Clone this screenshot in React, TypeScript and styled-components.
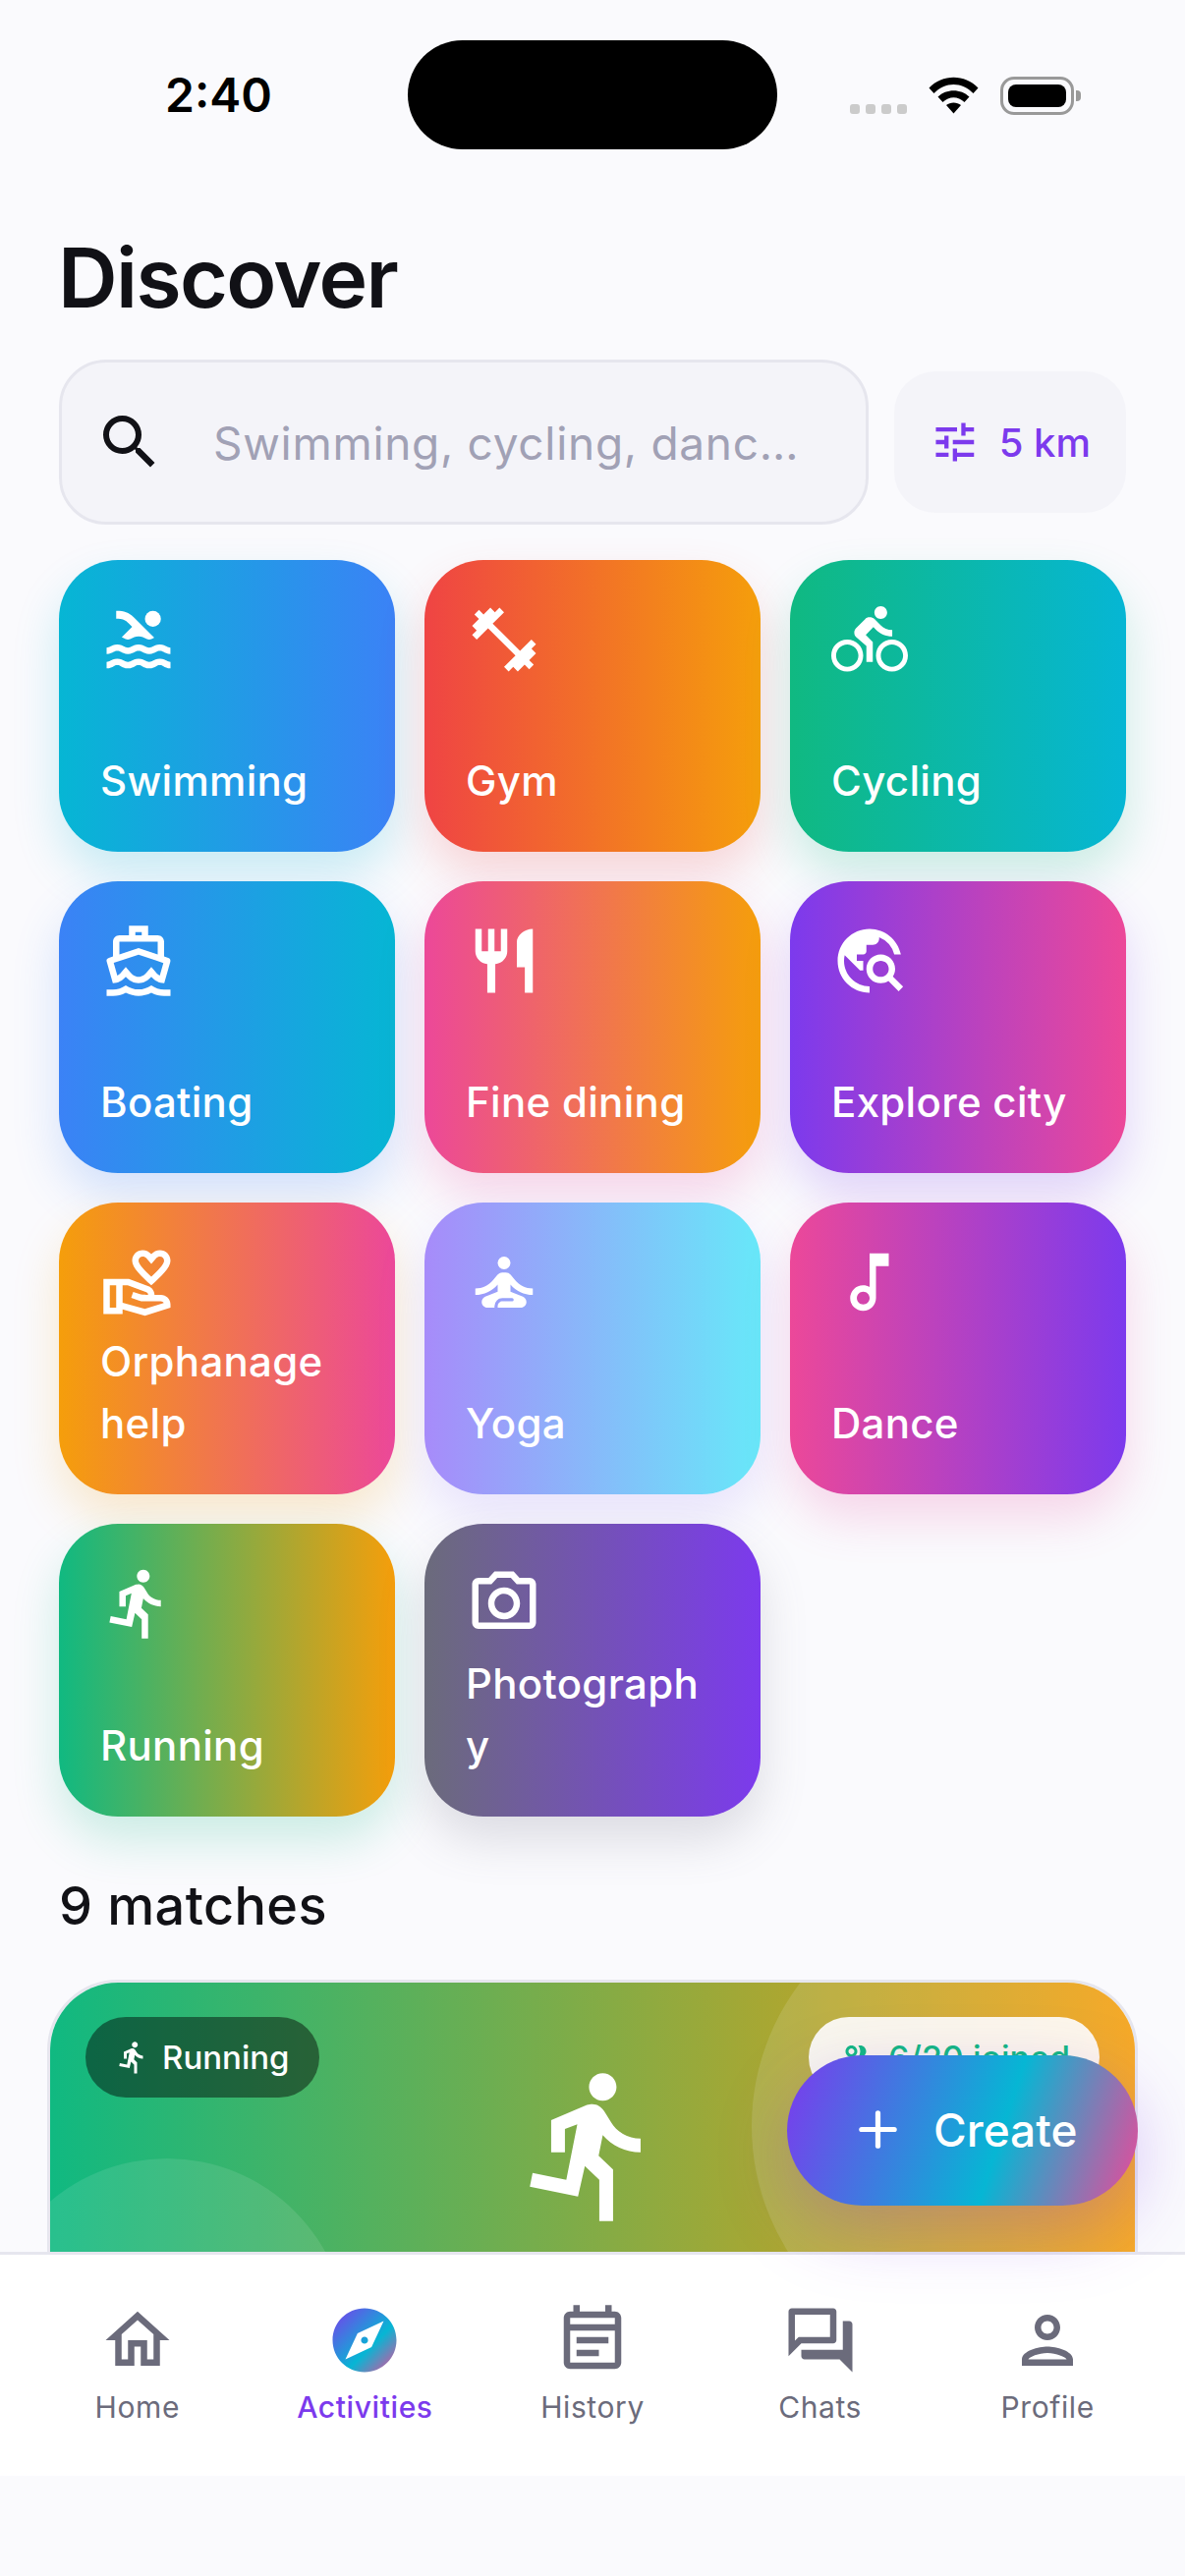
import React from "react";
import styled, { createGlobalStyle } from "styled-components";
import type { IconType } from "react-icons";
import { Plus } from "lucide-react";
import {
  MdDirectionsBike,
  MdDirectionsRun,
  MdFitnessCenter,
  MdOutlineCameraAlt,
  MdOutlineDirectionsBoat,
  MdOutlineEventNote,
  MdOutlineForum,
  MdOutlineHome,
  MdOutlineMusicNote,
  MdOutlinePeopleAlt,
  MdOutlinePerson,
  MdOutlineVolunteerActivism,
  MdPool,
  MdRestaurant,
  MdSearch,
  MdSelfImprovement,
  MdTravelExplore,
  MdTune,
} from "react-icons/md";

const Global = createGlobalStyle`
  html, body { margin: 0; padding: 0; background: #fafafd; }
  * { box-sizing: border-box; }
  body { font-family: Inter, "Liberation Sans", sans-serif; }
`;

const Phone = styled.div`
  position: relative;
  width: 1206px;
  height: 2622px;
  display: flex;
  flex-direction: column;
  background: #fafafd;
  overflow: hidden;
`;

const Main = styled.main`
  flex: 1;
  min-height: 0;
  overflow: hidden;
  display: flex;
  flex-direction: column;
`;

const StatusBar = styled.div`
  flex: none;
  height: 233px;
  padding: 41px 106px 0 168px;
  display: flex;
  align-items: flex-start;
`;

const Time = styled.div`
  flex: none;
  width: 247px;
  height: 111px;
  display: flex;
  align-items: center;
  font-size: 48px;
  font-weight: 600;
  color: #000;
`;

const Island = styled.div`
  flex: none;
  width: 376px;
  height: 111px;
  border-radius: 56px;
  background: #000;
`;

const StatusIcons = styled.div`
  flex: none;
  width: 235px;
  height: 111px;
  padding: 37px 0 0 0;
  margin-left: 74px;
  display: flex;
  align-items: flex-start;
`;

const Dots = styled.div`
  display: flex;
  gap: 6px;
  margin: 28px 22px 0 0;
`;

const Dot = styled.span`
  width: 10px;
  height: 10px;
  border-radius: 3px;
  background: #cbcbcb;
`;

const Battery = styled.div`
  position: relative;
  width: 75px;
  height: 39px;
  margin-left: 22px;
  padding: 5px;
  border: 3px solid #999;
  border-radius: 14px;
  &::after {
    content: "";
    position: absolute;
    right: -10px;
    top: 11px;
    width: 5px;
    height: 11px;
    border-radius: 0 4px 4px 0;
    background: #999;
  }
`;

const BatteryFill = styled.div`
  width: 100%;
  height: 100%;
  border-radius: 8px;
  background: #000;
`;

const Title = styled.h1`
  margin: 0 0 33px 59px;
  height: 100px;
  line-height: 100px;
  font-size: 84px;
  font-weight: 600;
  letter-spacing: -1.6px;
  color: #111116;
`;

const SearchRow = styled.div`
  flex: none;
  height: 168px;
  margin: 0 60px 36px;
  display: flex;
  align-items: center;
  gap: 26px;
`;

const SearchBox = styled.div`
  flex: 1;
  min-width: 0;
  height: 168px;
  padding: 0 36px 0 33px;
  display: flex;
  align-items: center;
  gap: 49px;
  background: #f4f4f9;
  border: 3px solid #e6e6ee;
  border-radius: 48px;
  color: #111116;
`;

const Placeholder = styled.span`
  padding-top: 2px;
  font-size: 46px;
  letter-spacing: 0.7px;
  color: #a1a1b5;
  white-space: nowrap;
`;

const FilterButton = styled.div`
  flex: none;
  width: 236px;
  height: 144px;
  padding: 0 36px;
  display: flex;
  align-items: center;
  gap: 19px;
  background: #f4f4f9;
  border-radius: 42px;
  color: #7c3aed;
  font-size: 40px;
  font-weight: 500;
  white-space: nowrap;
`;

const Grid = styled.div`
  flex: none;
  margin: 0 60px;
  display: grid;
  grid-template-columns: repeat(3, 342px);
  grid-template-rows: 297px 297px 297px 298px;
  gap: 30px;
`;

const Tile = styled.div<{ $from: string; $to: string; $glow: string }>`
  padding: 42px 42px 41px;
  display: flex;
  flex-direction: column;
  justify-content: space-between;
  border-radius: 60px;
  color: #fff;
  background: linear-gradient(90deg, ${(p) => p.$from}, ${(p) => p.$to});
  box-shadow: 0 24px 48px ${(p) => p.$glow};
`;

const TileLabel = styled.div`
  font-size: 42px;
  font-weight: 450;
  line-height: 63px;
  letter-spacing: 0.3px;
  overflow-wrap: anywhere;
`;

const SectionTitle = styled.h2`
  flex: none;
  margin: 56px 60px 40px;
  height: 70px;
  line-height: 70px;
  font-size: 54px;
  font-weight: 500;
  letter-spacing: 0.4px;
  color: #111116;
`;

const MatchCard = styled.article`
  flex: none;
  height: 600px;
  margin: 0 48px;
  border: 3px solid #e6e6ee;
  border-radius: 72px;
  overflow: hidden;
  background: #fff;
`;

const Hero = styled.div`
  position: relative;
  height: 594px;
  padding-top: 82px;
  display: flex;
  align-items: flex-start;
  justify-content: center;
  overflow: hidden;
  color: #fff;
  background: linear-gradient(90deg, #10b981, #f59e0b);
`;

const Bubble = styled.div`
  position: absolute;
  border-radius: 50%;
`;

const BubbleLarge = styled(Bubble)`
  width: 480px;
  height: 480px;
  top: -94px;
  right: -90px;
  background: rgba(255, 255, 255, 0.12);
`;

const BubbleSmall = styled(Bubble)`
  width: 368px;
  height: 368px;
  left: -65px;
  top: 179px;
  background: rgba(255, 255, 255, 0.1);
`;

const Pill = styled.div`
  position: absolute;
  top: 35px;
  height: 82px;
  padding: 0 30px;
  display: flex;
  align-items: center;
  gap: 12px;
  border-radius: 41px;
  font-size: 33px;
  font-weight: 500;
  white-space: nowrap;
`;

const SportPill = styled(Pill)`
  left: 36px;
  background: rgba(0, 0, 0, 0.45);
  color: #fff;
`;

const JoinedPill = styled(Pill)`
  right: 36px;
  gap: 15px;
  font-size: 34px;
  background: rgba(255, 255, 255, 0.9);
  color: #10b981;
`;

const Nav = styled.nav`
  flex: none;
  height: 228px;
  padding: 48px 24px 0;
  display: grid;
  grid-template-columns: repeat(5, 1fr);
  align-items: start;
  background: #fff;
  border-top: 3px solid #e6e6ee;
`;

const NavItem = styled.div`
  display: flex;
  flex-direction: column;
  align-items: center;
  gap: 7px;
  color: #6b6b7b;
`;

const NavLabel = styled.span<{ $active?: boolean }>`
  font-size: 30px;
  line-height: 44px;
  letter-spacing: 0.6px;
  font-weight: ${(p) => (p.$active ? 500 : 400)};
  color: ${(p) => (p.$active ? "#7c3aed" : "#6b6b7b")};
`;

const SafeArea = styled.div`
  flex: none;
  height: 102px;
`;

const Fab = styled.div`
  position: absolute;
  left: 801px;
  top: 2092px;
  width: 357px;
  height: 153px;
  padding: 0 0 2px 64px;
  display: flex;
  align-items: center;
  gap: 28px;
  border-radius: 77px;
  color: #fff;
  font-size: 46px;
  font-weight: 500;
  background: linear-gradient(108deg, #7c3aed, #06b6d4 60%, #ec4899);
  box-shadow: 0 24px 72px rgba(124, 58, 237, 0.28);
`;

type Sport = { label: string; icon: IconType; from: string; to: string; glow: string };

const sports: Sport[] = [
  { label: "Swimming", icon: MdPool, from: "#06b6d4", to: "#3b82f6", glow: "rgba(6,182,212,.2)" },
  { label: "Gym", icon: MdFitnessCenter, from: "#ef4444", to: "#f59e0b", glow: "rgba(239,68,68,.2)" },
  { label: "Cycling", icon: MdDirectionsBike, from: "#10b981", to: "#06b6d4", glow: "rgba(16,185,129,.2)" },
  { label: "Boating", icon: MdOutlineDirectionsBoat, from: "#3b82f6", to: "#06b6d4", glow: "rgba(59,130,246,.2)" },
  { label: "Fine dining", icon: MdRestaurant, from: "#ec4899", to: "#f59e0b", glow: "rgba(236,72,153,.2)" },
  { label: "Explore city", icon: MdTravelExplore, from: "#7c3aed", to: "#ec4899", glow: "rgba(124,58,237,.2)" },
  { label: "Orphanage help", icon: MdOutlineVolunteerActivism, from: "#f59e0b", to: "#ec4899", glow: "rgba(245,158,11,.2)" },
  { label: "Yoga", icon: MdSelfImprovement, from: "#a78bfa", to: "#67e8f9", glow: "rgba(167,139,250,.2)" },
  { label: "Dance", icon: MdOutlineMusicNote, from: "#ec4899", to: "#7c3aed", glow: "rgba(236,72,153,.2)" },
  { label: "Running", icon: MdDirectionsRun, from: "#10b981", to: "#f59e0b", glow: "rgba(16,185,129,.2)" },
  { label: "Photography", icon: MdOutlineCameraAlt, from: "#6b6b7b", to: "#7c3aed", glow: "rgba(107,107,123,.2)" },
];

const Wifi = () => (
  <svg width="51" height="38" viewBox="0 0 51 38" fill="#000">
    <path d="M0.5 11.5C14-3 37-3 50.5 11.5L45.5 17C34 5 17 5 5.5 17Z" />
    <path d="M9.5 20.5C18 12 33 12 41.5 20.5L36.5 26C30 19.5 21 19.5 14.5 26Z" />
    <path d="M18 29C22 25.5 29 25.5 33 29L25.5 37.5Z" />
  </svg>
);

const Compass = () => (
  <svg width="78" height="78" viewBox="0 0 24 24">
    <defs>
      <linearGradient id="compass" x1="0" y1="0" x2="1" y2="1">
        <stop offset="0" stopColor="#7c3aed" />
        <stop offset="0.6" stopColor="#06b6d4" />
        <stop offset="1" stopColor="#ec4899" />
      </linearGradient>
    </defs>
    <path
      fill="url(#compass)"
      d="M12 10.9c-.61 0-1.1.49-1.1 1.1s.49 1.1 1.1 1.1c.61 0 1.1-.49 1.1-1.1s-.49-1.1-1.1-1.1zM12 2C6.48 2 2 6.48 2 12s4.48 10 10 10 10-4.48 10-10S17.52 2 12 2zm2.19 12.19L6 18l3.81-8.19L18 6l-3.81 8.19z"
    />
  </svg>
);

export default function App() {
  return (
    <>
      <Global />
      <Phone>
        <Main>
          <StatusBar>
            <Time>2:40</Time>
            <Island />
            <StatusIcons>
              <Dots>
                <Dot />
                <Dot />
                <Dot />
                <Dot />
              </Dots>
              <Wifi />
              <Battery>
                <BatteryFill />
              </Battery>
            </StatusIcons>
          </StatusBar>
          <Title>Discover</Title>
          <SearchRow>
            <SearchBox>
              <MdSearch size={72} />
              <Placeholder>Swimming, cycling, danc…</Placeholder>
            </SearchBox>
            <FilterButton>
              <MdTune size={54} />
              <span>5 km</span>
            </FilterButton>
          </SearchRow>
          <Grid>
            {sports.map((s) => (
              <Tile key={s.label} $from={s.from} $to={s.to} $glow={s.glow}>
                <s.icon size={78} />
                <TileLabel>{s.label}</TileLabel>
              </Tile>
            ))}
          </Grid>
          <SectionTitle>9 matches</SectionTitle>
          <MatchCard>
            <Hero>
              <BubbleLarge />
              <BubbleSmall />
              <SportPill>
                <MdDirectionsRun size={36} />
                <span>Running</span>
              </SportPill>
              <JoinedPill>
                <MdOutlinePeopleAlt size={36} />
                <span>6/20 joined</span>
              </JoinedPill>
              <MdDirectionsRun size={168} />
            </Hero>
          </MatchCard>
        </Main>
        <Nav>
          <NavItem>
            <MdOutlineHome size={78} />
            <NavLabel>Home</NavLabel>
          </NavItem>
          <NavItem>
            <Compass />
            <NavLabel $active>Activities</NavLabel>
          </NavItem>
          <NavItem>
            <MdOutlineEventNote size={78} />
            <NavLabel>History</NavLabel>
          </NavItem>
          <NavItem>
            <MdOutlineForum size={78} />
            <NavLabel>Chats</NavLabel>
          </NavItem>
          <NavItem>
            <MdOutlinePerson size={78} />
            <NavLabel>Profile</NavLabel>
          </NavItem>
        </Nav>
        <SafeArea />
        <Fab>
          <Plus size={57} strokeWidth={2.2} />
          <span>Create</span>
        </Fab>
      </Phone>
    </>
  );
}
